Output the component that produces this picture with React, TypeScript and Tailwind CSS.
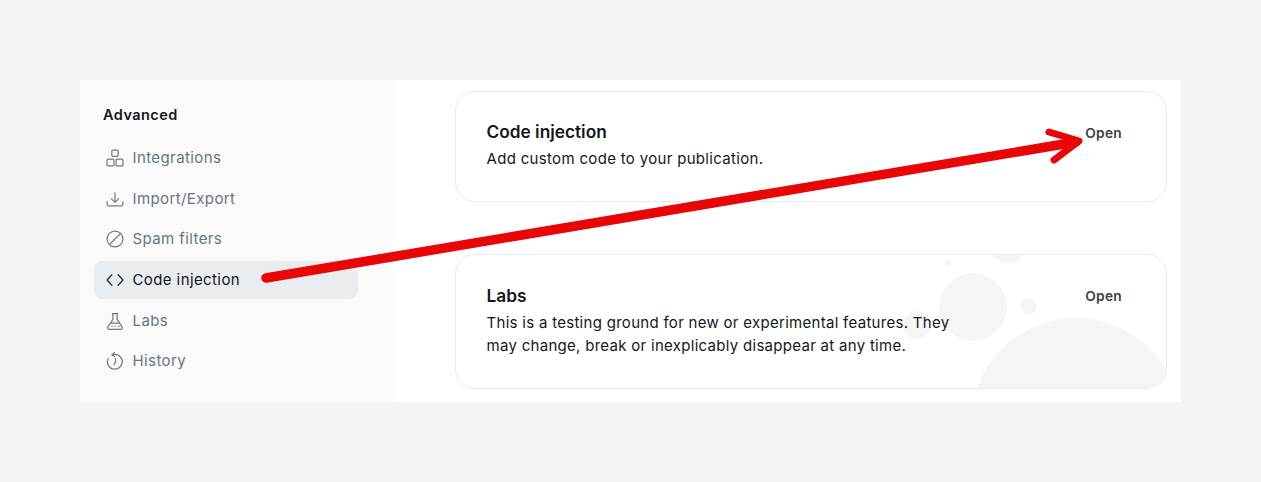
export default function App() {
  const Nav = ({ icon, label, active }: { icon: React.ReactNode; label: string; active?: boolean }) => (
    <div className={`flex h-[38.6px] items-center rounded-lg pl-[12px] text-[15px] tracking-[0.4px] ${active ? "bg-[#eaedf0] text-[#15171a]" : "text-[#667587]"}`}>
      <svg viewBox="0.5 0.5 17 17" className={`mr-[8.5px] h-[18px] w-[18px] ${active ? "text-[#30353b]" : "text-[#717b87]"}`} fill="none" stroke="currentColor" strokeWidth="1.15" strokeLinecap="round" strokeLinejoin="round">{icon}</svg>
      <span>{label}</span>
    </div>
  );
  return (
    <div className="relative h-[482px] w-[1261px] overflow-hidden bg-[#f3f4f6] p-[80px] font-['Inter',sans-serif]">
      <div className="flex h-[322px] w-[1101px] bg-white">
        <aside className="w-[313px] bg-[#fafafa] pl-[14px] pr-[35px] pt-[25px]">
          <h3 className="mb-[14px] pl-[9px] text-[14.5px] font-semibold leading-[20px] tracking-[0.45px] text-[#15171a]">Advanced</h3>
          <nav className="flex flex-col gap-[2px]">
            <Nav label="Integrations" icon={<><rect x="6" y="1.5" width="6" height="6" rx="1" /><rect x="1.5" y="10" width="6.5" height="6.5" rx="1" /><rect x="10" y="10" width="6.5" height="6.5" rx="1" /></>} />
            <Nav label="Import/Export" icon={<><path d="M9 3v9M5.5 8.7 9 12.2l3.5-3.5" /><path d="M1.5 11.5v2.5a1.5 1.5 0 0 0 1.5 1.5h12a1.5 1.5 0 0 0 1.5-1.5v-2.5" /></>} />
            <Nav label="Spam filters" icon={<><circle cx="9" cy="9" r="7.5" /><path d="M3.8 14.2 14.2 3.8" /></>} />
            <Nav active label="Code injection" icon={<path d="M6 4 1.5 9 6 14M12 4l4.5 5-4.5 5" strokeWidth="1.3" />} />
            <div className="translate-y-[0.5px]">
              <Nav label="Labs" icon={<><path d="M6.5 1.5h5M7 1.5v5.5L2.3 14a1.6 1.6 0 0 0 1.3 2.5h10.8a1.6 1.6 0 0 0 1.3-2.5L11 7V1.5" /><path d="M5 10.5h8M6 13.5h.5M9 13.5h.5M12 13.5h1" /></>} />
            </div>
            <Nav label="History" icon={<><path d="M6.3 3.2a7 7 0 1 1-3.6 3.2" /><path d="M8.5 1 6 3.2l2.7 1.6" /><path d="M9.5 6.5v3.5L8 12.5" /></>} />
          </nav>
        </aside>
        <main className="flex-1 pl-[62px] pr-[14px] pt-[11px]">
          <section className="flex h-[111px] items-start justify-between rounded-[20px] border border-[#e8ebee] bg-white pl-[30.5px] pr-[44px] pt-[28px]">
            <div>
              <h4 className="text-[17.3px] font-semibold leading-[24px] text-[#15171a]">Code injection</h4>
              <p className="mt-[4px] text-[15px] leading-[22px] tracking-[0.32px] text-[#15171a]">Add custom code to your publication.</p>
            </div>
            <button className="mt-[3px] text-[13.7px] font-semibold leading-[20px] tracking-[0.3px] text-[#394047]">Open</button>
          </section>
          <section className="relative mt-[52px] flex h-[135px] items-start justify-between overflow-hidden rounded-[20px] border border-[#e8ebee] bg-white pl-[30.5px] pr-[44px] pt-[29px]">
            <svg className="absolute left-0 top-0 h-full w-full" viewBox="0 0 710 133" fill="#f4f6f6" aria-hidden="true">
              <circle cx="552" cy="-10" r="18" />
              <circle cx="492" cy="8" r="3.5" />
              <circle cx="517" cy="52" r="34" />
              <circle cx="461" cy="70" r="14" />
              <circle cx="573" cy="51" r="8" />
              <circle cx="620" cy="168" r="105" />
            </svg>
            <div className="relative w-[480px]">
              <h4 className="text-[17.3px] font-semibold leading-[24px] text-[#15171a]">Labs</h4>
              <p className="mt-[3px] text-[15px] leading-[23px] tracking-[0.29px] text-[#15171a]">This is a testing ground for new or experimental features. They may change, break or inexplicably disappear at any time.</p>
            </div>
            <button className="relative mt-[2px] text-[13.7px] font-semibold leading-[20px] tracking-[0.3px] text-[#394047]">Open</button>
          </section>
        </main>
      </div>
      <svg className="pointer-events-none absolute left-0 top-0" width="1261" height="482" viewBox="0 0 1261 482" fill="none" stroke="#e90606" strokeLinecap="round" strokeLinejoin="round" aria-hidden="true">
        <path d="M266 278 1076 142" strokeWidth="9.5" />
        <path d="M1049 132 1079 141 1054 160" strokeWidth="7" />
      </svg>
    </div>
  );
}
